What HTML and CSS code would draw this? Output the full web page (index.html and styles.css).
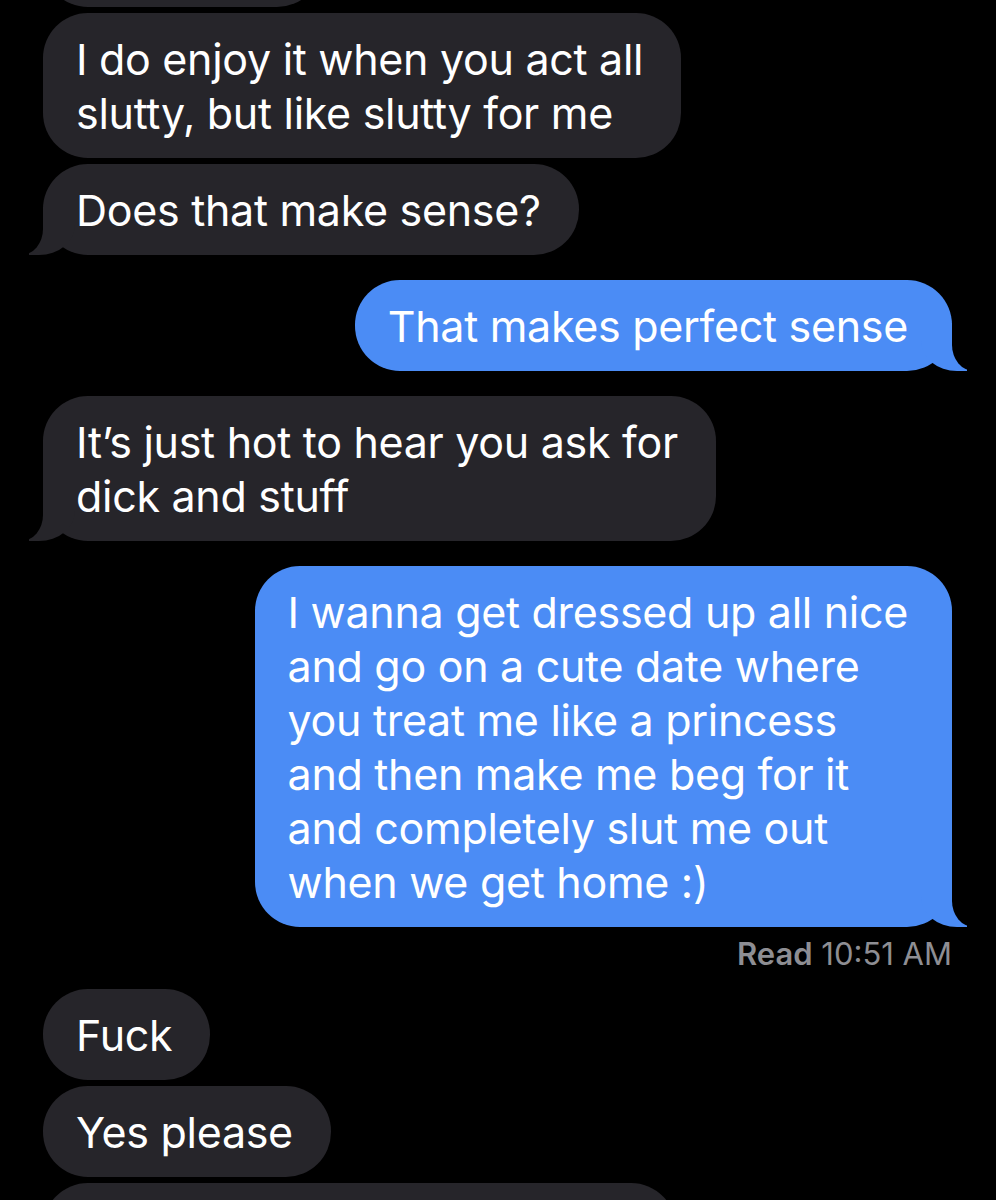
FILE: index.html
```html
<!DOCTYPE html>
<html lang="en">
<head>
  <meta charset="UTF-8" />
  <title>Messages</title>
  <link rel="stylesheet" href="styles.css">
</head>
<body>
  <div class="thread">

    <div class="group">
      <div class="bubble in blank-top"></div>
      <div class="bubble in">I do enjoy it when you act all<br>slutty, but like slutty for me</div>
      <div class="bubble in tail">Does that make sense?</div>
    </div>

    <div class="group">
      <div class="bubble out tail">That makes perfect sense</div>
    </div>

    <div class="group">
      <div class="bubble in tail">It’s just hot to hear you ask for<br>dick and stuff</div>
    </div>

    <div class="group">
      <div class="bubble out tail">I wanna get dressed up all nice<br>and go on a cute date where<br>you treat me like a princess<br>and then make me beg for it<br>and completely slut me out<br>when we get home :)</div>
      <div class="receipt"><b>Read</b> 10:51 AM</div>
    </div>

    <div class="group">
      <div class="bubble in">Fuck</div>
      <div class="bubble in">Yes please</div>
      <div class="bubble in blank-bottom"></div>
    </div>

  </div>
</body>
</html>
```

FILE: styles.css
```css
body {
  margin: 0;
  background: #000;
  font-family: "Inter", "Roboto", sans-serif;
  color: #fff;
  overflow: hidden;
  height: 1200px;
}

.thread {
  display: flex;
  flex-direction: column;
  gap: 25px;
  padding: 0 44px 0 43px;
  margin-top: -84px;
}

.group {
  display: flex;
  flex-direction: column;
  gap: 6px;
}

.bubble {
  position: relative;
  font-size: 43px;
  line-height: 54px;
  letter-spacing: -0.3px;
  border-radius: 45px;
  padding: 19px 38px 18px 33px;
  max-width: 760px;
}

.bubble.in {
  align-self: flex-start;
  background: #26252a;
}

.bubble.out {
  align-self: flex-end;
  background: #4b8cf5;
  padding: 19px 44px 18px 33px;
}

.blank-top {
  width: 208px;
  height: 54px;
}

.blank-bottom {
  width: 562px;
  height: 108px;
}

/* tails */
.tail::before,
.tail::after {
  content: "";
  position: absolute;
  bottom: 0;
  height: 48px;
}

.in.tail::before {
  left: -14px;
  width: 46px;
  background: #26252a;
  border-bottom-right-radius: 36px 30px;
}

.in.tail::after {
  left: -44px;
  width: 44px;
  background: #000;
  border-bottom-right-radius: 22px 26px;
}

.out.tail::before {
  right: -15px;
  width: 46px;
  background: #4b8cf5;
  border-bottom-left-radius: 36px 30px;
}

.out.tail::after {
  right: -44px;
  width: 44px;
  background: #000;
  border-bottom-left-radius: 22px 26px;
}

.receipt {
  align-self: flex-end;
  margin-top: 4px;
  margin-bottom: -7px;
  font-size: 31px;
  line-height: 34px;
  color: #8e8e93;
}

.receipt b {
  font-weight: 600;
}
```
